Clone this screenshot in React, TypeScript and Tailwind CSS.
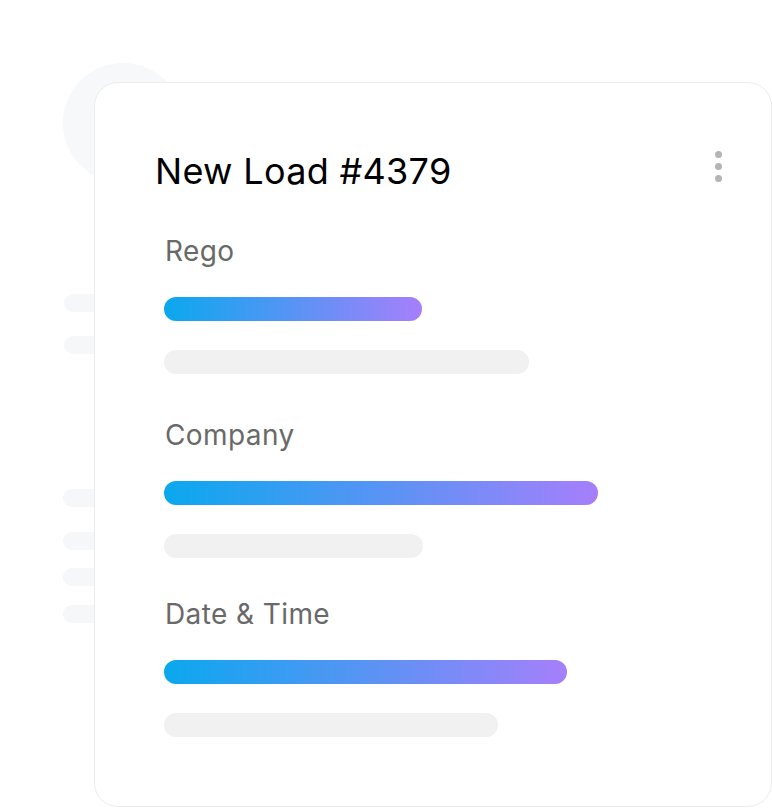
import React from "react";

const sections = [
  { label: "Rego", bar: 258, gray: 365, mt: "mt-0" },
  { label: "Company", bar: 434, gray: 259, mt: "mt-[45px]" },
  { label: "Date & Time", bar: 403, gray: 334, mt: "mt-[40px]" },
];

export default function App() {
  return (
    <div
      className="relative w-[772px] h-[808px] overflow-hidden bg-white"
      style={{ fontFamily: "Inter, 'Noto Sans', sans-serif" }}
    >
      {/* background decoration */}
      <div className="absolute left-[63px] top-[63px] w-[120px] h-[120px] rounded-full bg-[#f7f8fa]" />
      <div className="absolute left-[64px] top-[294px] flex flex-col">
        <div className="h-[18px] w-[80px] rounded-full bg-[#f6f7f9]" />
        <div className="mt-[24px] h-[18px] w-[80px] rounded-full bg-[#f6f7f9]" />
      </div>
      <div className="absolute left-[63px] top-[489px] flex flex-col">
        <div className="h-[18px] w-[80px] rounded-full bg-[#f6f7f9]" />
        <div className="mt-[25px] h-[18px] w-[80px] rounded-full bg-[#f6f7f9]" />
        <div className="mt-[18px] h-[18px] w-[80px] rounded-full bg-[#f6f7f9]" />
        <div className="mt-[19px] h-[18px] w-[80px] rounded-full bg-[#f6f7f9]" />
      </div>

      {/* card */}
      <div className="absolute left-[94px] top-[82px] w-[678px] h-[725px] rounded-[24px] border border-[#ededed] bg-white pt-[66px] pl-[60px] pr-[49px]">
        <div className="flex items-center justify-between">
          <h1 className="text-[36px] leading-[44px] font-normal text-black tracking-[0.3px]">
            New Load #4379
          </h1>
          <div className="flex flex-col gap-[5px] -mt-[10px]">
            <span className="block w-[7px] h-[7px] rounded-full bg-[#b4b4b4]" />
            <span className="block w-[7px] h-[7px] rounded-full bg-[#b4b4b4]" />
            <span className="block w-[7px] h-[7px] rounded-full bg-[#b4b4b4]" />
          </div>
        </div>

        <div className="ml-[10px] mt-[42px] flex flex-col">
          {sections.map((s) => (
            <div key={s.label} className={`${s.mt} flex flex-col`}>
              <div className="text-[28px] leading-[32px] text-[#696969] tracking-[0.4px]">
                {s.label}
              </div>
              <div
                className="-ml-px mt-[30px] h-[24px] rounded-full bg-[linear-gradient(to_right,#0aa8ee,#a67ffb)]"
                style={{ width: s.bar }}
              />
              <div
                className="-ml-px mt-[29px] h-[24px] rounded-full bg-[#f1f1f1]"
                style={{ width: s.gray }}
              />
            </div>
          ))}
        </div>
      </div>
    </div>
  );
}
